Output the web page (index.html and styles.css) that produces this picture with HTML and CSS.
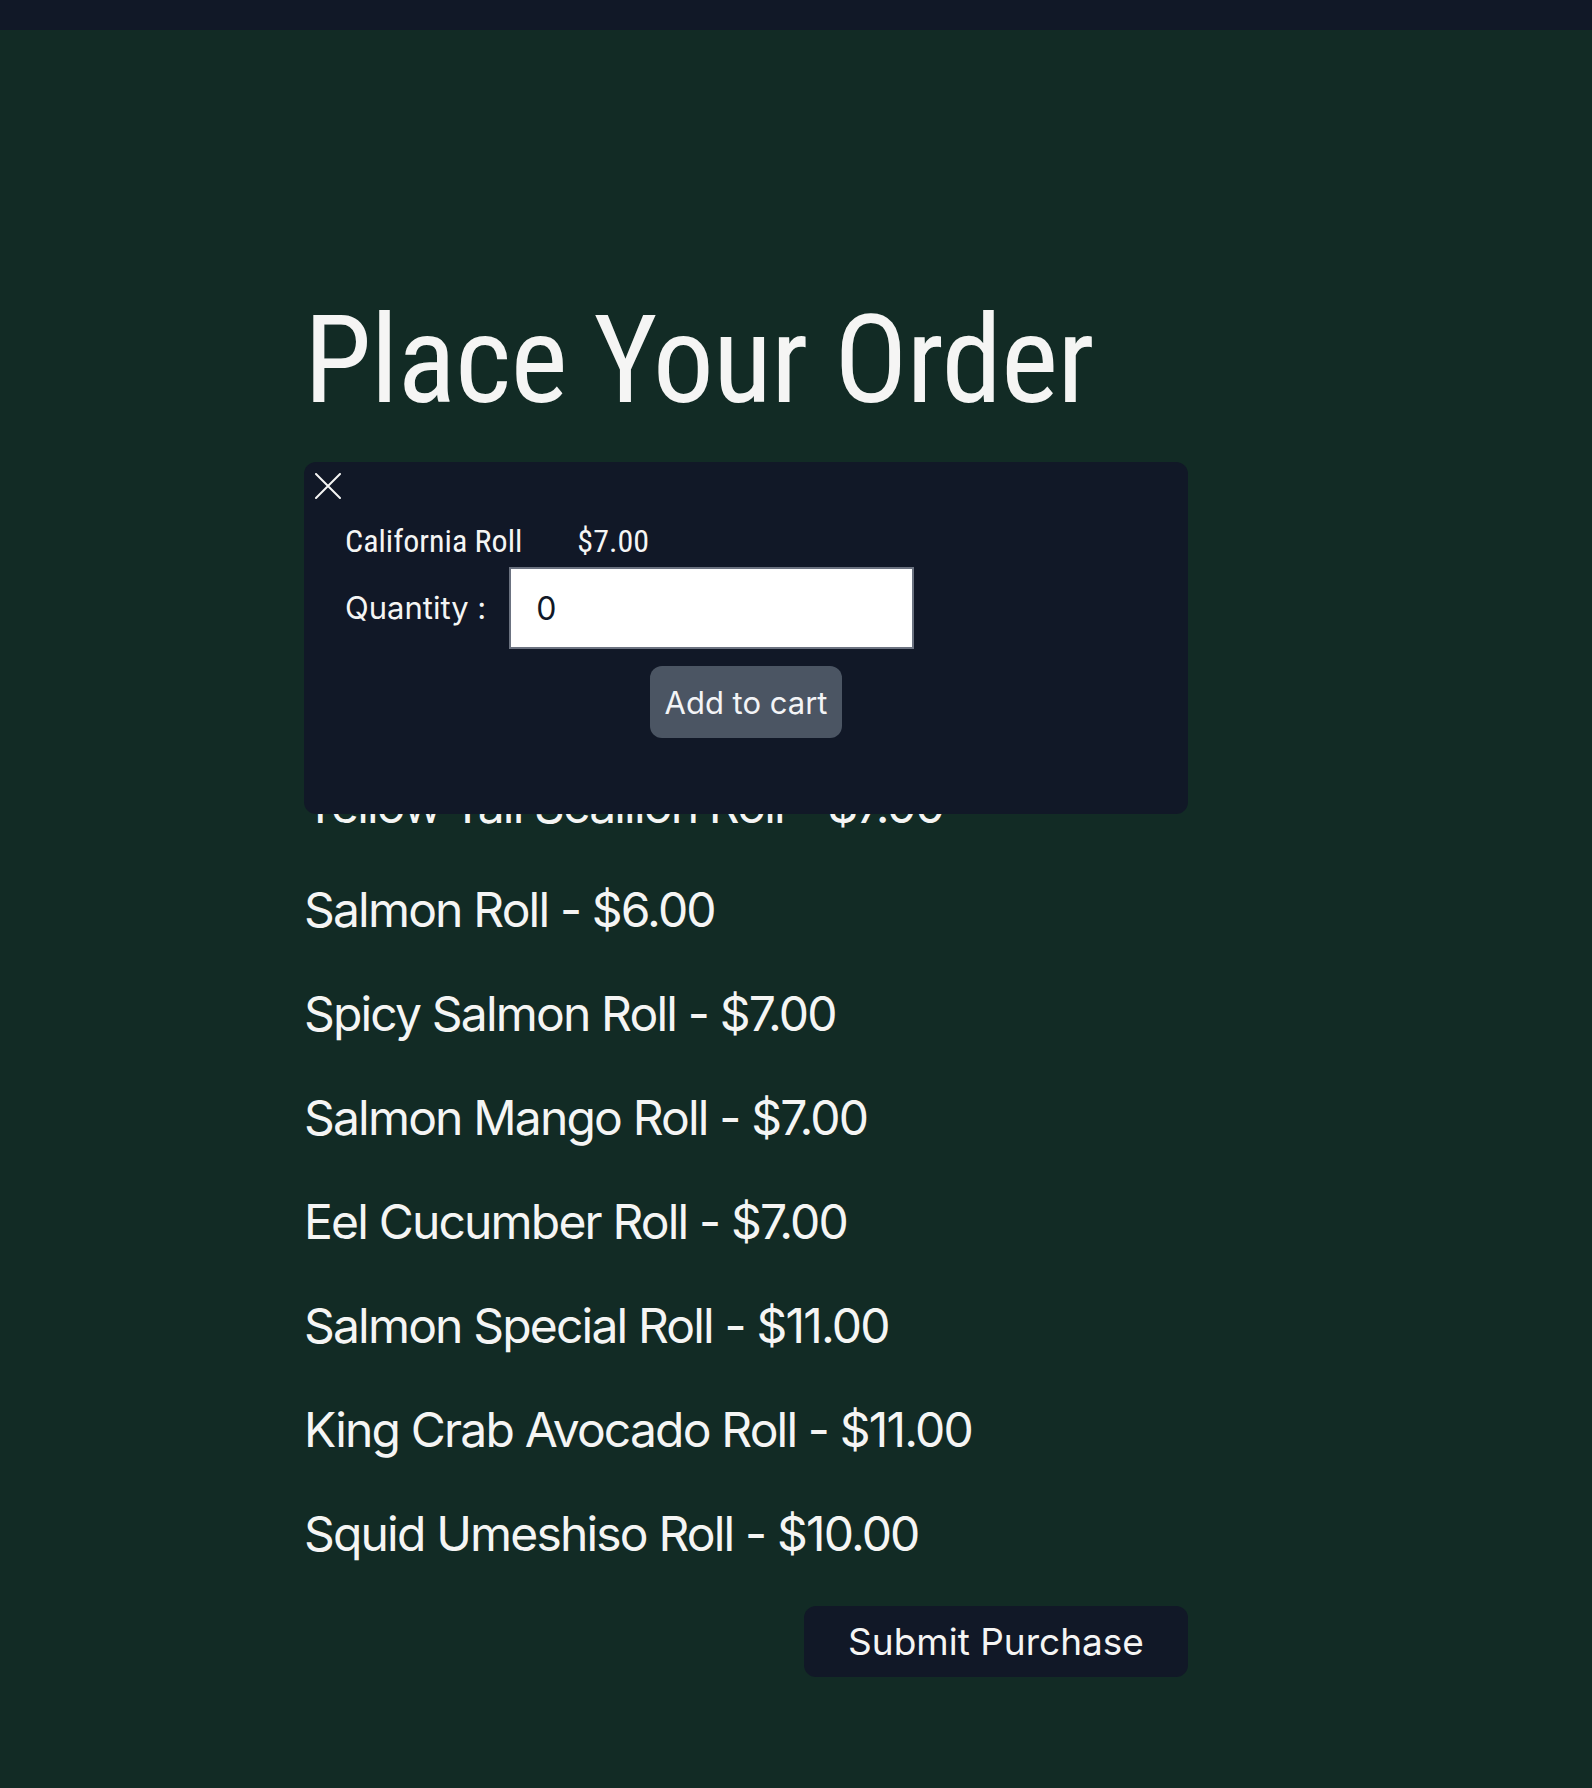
FILE: index.html
```html
<!DOCTYPE html>
<html lang="en">
<head>
<meta charset="utf-8">
<title>Place Your Order</title>
<link rel="stylesheet" href="styles.css">
</head>
<body>
<div class="topbar"></div>
<main class="page">
  <h1 class="title">Place Your Order</h1>
  <ul class="menu">
    <li class="menu-item">California Roll - $7.00</li>
    <li class="menu-item">Spicy Tuna Roll - $7.00</li>
    <li class="menu-item">Tuna Avocado Roll - $7.00</li>
    <li class="menu-item">Yellow Tail Scallion Roll - $7.00</li>
    <li class="menu-item">Salmon Roll - $6.00</li>
    <li class="menu-item">Spicy Salmon Roll - $7.00</li>
    <li class="menu-item">Salmon Mango Roll - $7.00</li>
    <li class="menu-item">Eel Cucumber Roll - $7.00</li>
    <li class="menu-item">Salmon Special Roll - $11.00</li>
    <li class="menu-item">King Crab Avocado Roll - $11.00</li>
    <li class="menu-item">Squid Umeshiso Roll - $10.00</li>
  </ul>
  <div class="actions">
    <button class="submit" type="button">Submit Purchase</button>
  </div>

  <div class="modal">
    <button class="close" type="button" aria-label="Close">
      <svg width="26" height="26" viewBox="0 0 26 26" fill="none" stroke="#f5f5f4" stroke-width="2" stroke-linecap="round">
        <path d="M1 1L25 25M25 1L1 25"/>
      </svg>
    </button>
    <div class="item-row">
      <span class="item-name">California Roll</span>
      <span class="item-price">$7.00</span>
    </div>
    <div class="qty-row">
      <label class="qty-label" for="qty">Quantity :</label>
      <input class="qty-input" id="qty" type="text" value="0">
    </div>
    <div class="cart-row">
      <button class="add-cart" type="button">Add to cart</button>
    </div>
  </div>
</main>
</body>
</html>
```
FILE: styles.css
```css
html, body {
  margin: 0;
  padding: 0;
}
body {
  background: #122b25;
  color: #f5f5f4;
  font-family: Inter, "Noto Sans", sans-serif;
  min-height: 1788px;
}
.topbar {
  height: 30px;
  background: #111827;
}
.page {
  position: relative;
  margin-left: 304px;
  width: 884px;
  padding-top: 269px;
  padding-bottom: 80px;
}
.title {
  margin: 0;
  font-family: "Roboto Condensed", Roboto, sans-serif;
  font-stretch: condensed;
  font-weight: 400;
  font-size: 122px;
  line-height: 124px;
  letter-spacing: -1px;
  color: #f5f5f4;
  white-space: nowrap;
}
.menu {
  list-style: none;
  margin: 47px 0 0;
  padding: 0;
  display: flex;
  flex-direction: column;
  gap: 56px;
}
.menu-item {
  font-size: 48px;
  line-height: 48px;
  letter-spacing: -0.038em;
  white-space: nowrap;
}
.actions {
  display: flex;
  justify-content: flex-end;
  margin-top: 48px;
}
.submit {
  width: 384px;
  height: 71px;
  border: none;
  border-radius: 12px;
  background: #111827;
  color: #f5f5f4;
  font-family: Inter, "Noto Sans", sans-serif;
  font-size: 37px;
  letter-spacing: 0;
  padding: 0;
}
.modal {
  position: absolute;
  top: 432px;
  left: 0;
  width: 884px;
  box-sizing: border-box;
  background: #111827;
  border-radius: 12px;
  padding: 11px 0 76px;
}
.close {
  display: block;
  margin-left: 11px;
  padding: 0;
  width: 26px;
  height: 26px;
  border: none;
  background: none;
}
.close svg {
  display: block;
}
.item-row {
  display: flex;
  gap: 55px;
  margin: 24px 0 0 41px;
  font-family: "Roboto Condensed", Roboto, sans-serif;
  font-stretch: condensed;
  font-size: 32px;
  line-height: 36px;
}
.qty-row {
  display: flex;
  align-items: center;
  gap: 23px;
  margin: 8px 0 0 41px;
}
.qty-label {
  font-size: 31px;
  line-height: 36px;
}
.qty-input {
  box-sizing: border-box;
  width: 405px;
  height: 82px;
  margin: 0;
  border: 2px solid #6b7280;
  border-radius: 0;
  padding: 0 25px;
  background: #ffffff;
  color: #111827;
  font-family: Inter, "Noto Sans", sans-serif;
  font-size: 32px;
  outline: none;
}
.cart-row {
  display: flex;
  justify-content: center;
  margin-top: 17px;
}
.add-cart {
  height: 72px;
  padding: 0 15px;
  border: none;
  border-radius: 12px;
  background: #4b5563;
  color: #f3f4f6;
  font-family: Inter, "Noto Sans", sans-serif;
  font-size: 31px;
}
```
